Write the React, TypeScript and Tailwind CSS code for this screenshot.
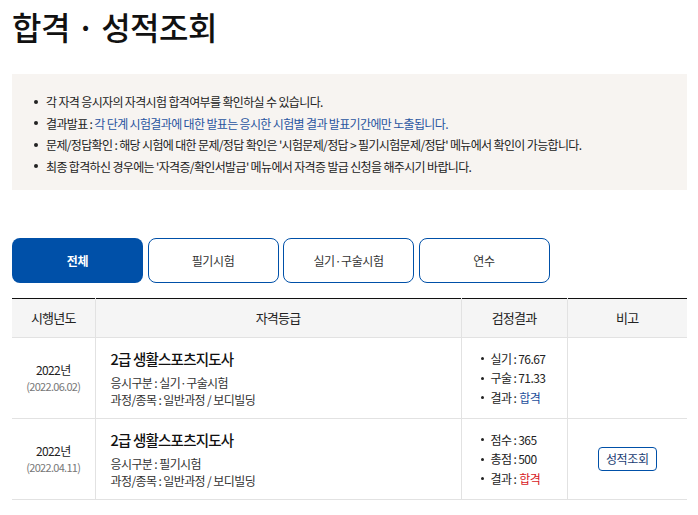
const font = { fontFamily: '"Noto Sans CJK KR", "Noto Sans", sans-serif' }

const notices = [
  { label: '', text: '각 자격 응시자의 자격시험 합격여부를 확인하실 수 있습니다.', blue: false },
  { label: '결과발표 : ', text: '각 단계 시험결과에 대한 발표는 응시한 시험별 결과 발표기간에만 노출됩니다.', blue: true },
  { label: '문제/정답확인 : ', text: "해당 시험에 대한 문제/정답 확인은 '시험문제/정답 > 필기시험문제/정답' 메뉴에서 확인이 가능합니다.", blue: false },
  { label: '', text: "최종 합격하신 경우에는 '자격증/확인서발급' 메뉴에서 자격증 발급 신청을 해주시기 바랍니다.", blue: false },
]

const tabs = ['전체', '필기시험', '실기·구술시험', '연수']

const rows = [
  {
    year: '2022년',
    date: '(2022.06.02)',
    type: '실기·구술시험',
    scores: [
      ['실기', '76.67'],
      ['구술', '71.33'],
    ],
    pass: 'text-[#1d4f9c]',
    button: false,
  },
  {
    year: '2022년',
    date: '(2022.04.11)',
    type: '필기시험',
    scores: [
      ['점수', '365'],
      ['총점', '500'],
    ],
    pass: 'text-[#d7191f]',
    button: true,
  },
]

const App = () => {
  return (
    <div className="w-[698px] bg-white text-[#222]" style={font}>
      <div className="px-[12px] pt-[4px]">
        <h1 className="text-[32px] font-medium leading-[44px] tracking-[-0.5px] text-[#111]">
          합격 · 성적조회
        </h1>

        <div className="mt-[26px] w-[675px] bg-[#f7f4f1] px-[22px] pt-[17px] pb-[13px]">
          <ul>
            {notices.map((n, i) => (
              <li key={i} className="flex items-center text-[12px] leading-[21.5px] tracking-[-0.65px]">
                <span className="mr-[8px] h-[4px] w-[4px] shrink-0 rounded-full bg-[#222]" />
                <span>
                  {n.label}
                  <span className={n.blue ? 'text-[#2955a0]' : ''}>{n.text}</span>
                </span>
              </li>
            ))}
          </ul>
        </div>

        <div className="mt-[48px] flex gap-[4.5px]">
          {tabs.map((t, i) => (
            <div
              key={t}
              className={
                i === 0
                  ? 'flex h-[45px] w-[131px] items-center justify-center rounded-[8px] bg-[#0050a8] text-[12px] font-bold tracking-[-0.4px] text-white'
                  : 'flex h-[45px] w-[131px] items-center justify-center rounded-[8px] border border-[#0050a8] text-[12px] tracking-[-0.4px] text-[#333]'
              }
            >
              {t}
            </div>
          ))}
        </div>

        <table className="mt-[15px] w-[675px] table-fixed border-collapse border-t-[1.5px] border-t-[#111] text-[12px] tracking-[-0.6px]">
          <colgroup>
            <col className="w-[83px]" />
            <col className="w-[366px]" />
            <col className="w-[106px]" />
            <col className="w-[120px]" />
          </colgroup>
          <thead>
            <tr className="h-[39px] bg-[#f5f5f5] text-[13px] text-[#222]">
              <th className="border-b border-r border-[#e2e2e2] font-normal tracking-[-0.8px]">시행년도</th>
              <th className="border-b border-r border-[#e2e2e2] font-normal tracking-[-0.8px]">자격등급</th>
              <th className="border-b border-r border-[#e2e2e2] font-normal tracking-[-0.8px]">검정결과</th>
              <th className="border-b border-[#e2e2e2] font-normal tracking-[-0.8px]">비고</th>
            </tr>
          </thead>
          <tbody>
            {rows.map((r, i) => (
              <tr key={i} className="h-[81px]">
                <td className="border-b border-r border-[#e2e2e2] text-center align-middle">
                  <div className="leading-[16px] text-[#222]">{r.year}</div>
                  <div className="text-[11px] leading-[16px] tracking-[-0.7px] text-[#777]">{r.date}</div>
                </td>
                <td className="border-b border-r border-[#e2e2e2] pl-[15px] align-middle">
                  <div className="text-[14.5px] font-medium leading-[22px] tracking-[-0.8px] text-[#111]">
                    2급 생활스포츠지도사
                  </div>
                  <div className="mt-[4px] leading-[17px] text-[#333]">응시구분 : {r.type}</div>
                  <div className="leading-[18px] text-[#333]">과정/종목 : 일반과정 / 보디빌딩</div>
                </td>
                <td className="border-b border-r border-[#e2e2e2] pl-[19px] align-middle">
                  <ul>
                    {r.scores.map(([k, v]) => (
                      <li key={k} className="flex items-center leading-[19.5px] text-[#222]">
                        <span className="mr-[7px] h-[3px] w-[3px] rounded-full bg-[#222]" />
                        {k} : {v}
                      </li>
                    ))}
                    <li className="flex items-center leading-[19.5px] text-[#222]">
                      <span className="mr-[7px] h-[3px] w-[3px] rounded-full bg-[#222]" />
                      결과 : <span className={'ml-[3px] ' + r.pass}>합격</span>
                    </li>
                  </ul>
                </td>
                <td className="border-b border-[#e2e2e2] text-center align-middle">
                  {r.button && (
                    <button className="h-[24px] w-[59px] rounded-[4px] border border-[#0050a8] text-[12px] tracking-[-0.4px] text-[#1a3d73]">
                      성적조회
                    </button>
                  )}
                </td>
              </tr>
            ))}
          </tbody>
        </table>
      </div>
    </div>
  )
}

export default App
